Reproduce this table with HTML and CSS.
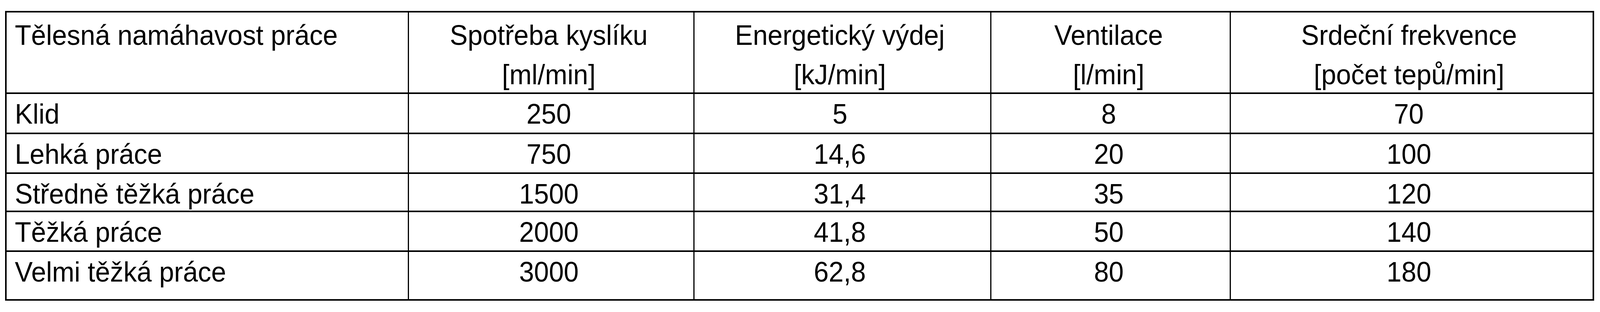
FILE: index.html
```html
<!DOCTYPE html>
<html lang="cs">
<head>
<meta charset="utf-8">
<title>Tělesná namáhavost práce</title>
<link rel="stylesheet" href="styles.css">
</head>
<body>
<div class="table" role="table">
  <div class="cell head first" role="columnheader"><span class="txt">Tělesná namáhavost práce</span></div>
  <div class="cell head" role="columnheader"><span class="txt">Spotřeba kyslíku<br>[ml/min]</span></div>
  <div class="cell head" role="columnheader"><span class="txt">Energetický výdej<br>[kJ/min]</span></div>
  <div class="cell head" role="columnheader"><span class="txt">Ventilace<br>[l/min]</span></div>
  <div class="cell head" role="columnheader"><span class="txt">Srdeční frekvence<br>[počet tepů/min]</span></div>

  <div class="cell first" role="cell"><span class="txt">Klid</span></div>
  <div class="cell" role="cell"><span class="txt">250</span></div>
  <div class="cell" role="cell"><span class="txt">5</span></div>
  <div class="cell" role="cell"><span class="txt">8</span></div>
  <div class="cell" role="cell"><span class="txt">70</span></div>

  <div class="cell first" role="cell"><span class="txt">Lehká práce</span></div>
  <div class="cell" role="cell"><span class="txt">750</span></div>
  <div class="cell" role="cell"><span class="txt">14,6</span></div>
  <div class="cell" role="cell"><span class="txt">20</span></div>
  <div class="cell" role="cell"><span class="txt">100</span></div>

  <div class="cell first" role="cell"><span class="txt">Středně těžká práce</span></div>
  <div class="cell" role="cell"><span class="txt">1500</span></div>
  <div class="cell" role="cell"><span class="txt">31,4</span></div>
  <div class="cell" role="cell"><span class="txt">35</span></div>
  <div class="cell" role="cell"><span class="txt">120</span></div>

  <div class="cell first" role="cell"><span class="txt">Těžká práce</span></div>
  <div class="cell" role="cell"><span class="txt">2000</span></div>
  <div class="cell" role="cell"><span class="txt">41,8</span></div>
  <div class="cell" role="cell"><span class="txt">50</span></div>
  <div class="cell" role="cell"><span class="txt">140</span></div>

  <div class="cell first" role="cell"><span class="txt">Velmi těžká práce</span></div>
  <div class="cell" role="cell"><span class="txt">3000</span></div>
  <div class="cell" role="cell"><span class="txt">62,8</span></div>
  <div class="cell" role="cell"><span class="txt">80</span></div>
  <div class="cell" role="cell"><span class="txt">180</span></div>
</div>
</body>
</html>
```

FILE: styles.css
```css
html, body {
  background: #fff;
}

body {
  margin: 28px 0 0 0.32vw;
  font-family: "Liberation Sans", Arial, Helvetica, sans-serif;
  font-size: 73px;
  color: #000;
}

.table {
  box-sizing: border-box;
  width: 99.31vw;
  display: grid;
  grid-template-columns: 1094fr 776fr 806fr 651fr 986fr;
  grid-template-rows: 205px 99px 98px 94px 98px 121px;
  column-gap: 3px;
  row-gap: 4px;
  padding: 4px;
  background: #000;
}

.cell {
  background: #fff;
  padding: 9px 1.6% 0 0;
  line-height: 84px;
  text-align: center;
  white-space: nowrap;
  min-width: 0;
}

.cell.head {
  padding-top: 7px;
  line-height: 101px;
}

.cell.first {
  text-align: left;
  padding-left: 2%;
  padding-right: 0;
}

.txt {
  display: inline-block;
  transform: scaleX(0.9388);
  transform-origin: center top;
}

.first .txt {
  transform-origin: left top;
}
```
